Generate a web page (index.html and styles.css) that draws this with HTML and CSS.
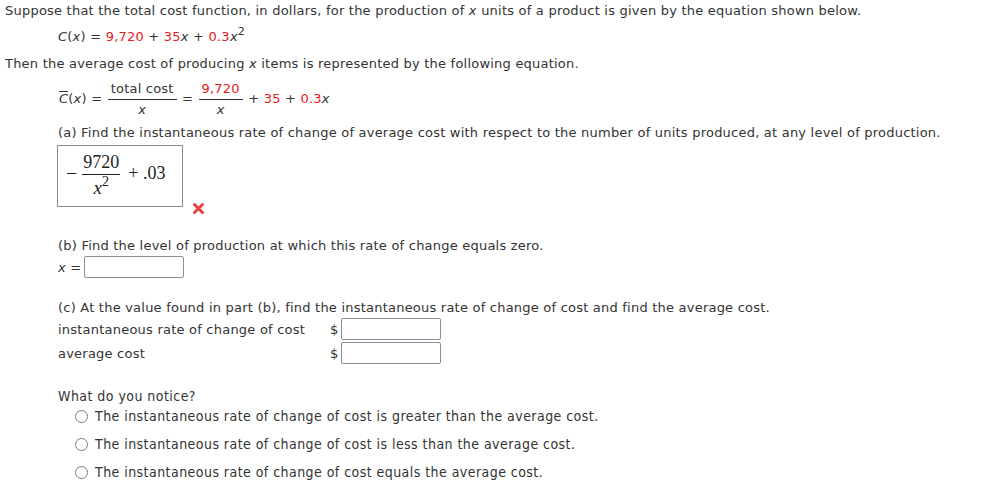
FILE: index.html
```html
<!DOCTYPE html>
<html>
<head>
<meta charset="utf-8">
<link rel="stylesheet" href="styles.css">
</head>
<body>
<div class="page">
  <p class="line l1">Suppose that the total cost function, in dollars, for the production of <i>x</i> units of a product is given by the equation shown below.</p>
  <div class="eq eq1"><i>C</i>(<i>x</i>) = <span class="red">9,720</span> + <span class="red">35</span><i>x</i> + <span class="red">0.3</span><i>x</i><sup>2</sup></div>
  <p class="line l2">Then the average cost of producing <i>x</i> items is represented by the following equation.</p>
  <div class="eq eq2"><span class="cbar"><i>C</i></span>(<i>x</i>) = <span class="frac"><span class="num">total cost</span><span class="den"><i>x</i></span></span> = <span class="frac"><span class="num red">9,720</span><span class="den"><i>x</i></span></span> + <span class="red">35</span> + <span class="red">0.3</span><i>x</i></div>
  <div class="part">
    <p class="q qa">(a) Find the instantaneous rate of change of average cost with respect to the number of units produced, at any level of production.</p>
    <div class="answer-row">
      <div class="answer-box">
        <span class="m-minus">−</span>
        <span class="mfrac"><span class="mnum">9720</span><span class="mden"><i>x</i><sup>2</sup></span></span>
        <span class="m-plus">+ .03</span>
      </div>
      <svg class="xmark" width="13" height="13" viewBox="0 0 13 13"><path d="M2.5 2.5 L10.5 10.5 M10.5 2.5 L2.5 10.5" stroke="#e8403f" stroke-width="3" stroke-linecap="round"/></svg>
    </div>
  </div>
  <div class="part">
    <p class="q qb">(b) Find the level of production at which this rate of change equals zero.</p>
    <div class="xrow"><span class="xlabel"><i>x</i> =</span><span class="input w100"></span></div>
  </div>
  <div class="part">
    <p class="q qc">(c) At the value found in part (b), find the instantaneous rate of change of cost and find the average cost.</p>
    <div class="crow"><span class="clabel">instantaneous rate of change of cost</span><span class="dollar">$</span><span class="input w100"></span></div>
    <div class="crow"><span class="clabel">average cost</span><span class="dollar">$</span><span class="input w100"></span></div>
  </div>
  <div class="notice">
    <p class="nq">What do you notice?</p>
    <div class="opt"><span class="radio"></span>The instantaneous rate of change of cost is greater than the average cost.</div>
    <div class="opt"><span class="radio"></span>The instantaneous rate of change of cost is less than the average cost.</div>
    <div class="opt"><span class="radio"></span>The instantaneous rate of change of cost equals the average cost.</div>
  </div>
</div>
</body>
</html>
```
FILE: styles.css
```css
html, body {
  margin: 0;
  padding: 0;
  background: #fff;
}
body {
  font-family: "DejaVu Sans", Verdana, sans-serif;
  font-size: 13px;
  letter-spacing: 0.22px;
  color: #333;
}
.page {
  padding: 2px 0 0 5px;
}
p { margin: 0; }
.line { line-height: 18px; }
.red { color: #e8191a; }
.eq { margin-left: 53px; }
.eq1 { margin-top: 8px; line-height: 18px; }
.eq1 sup { font-size: 11px; vertical-align: 6px; line-height: 0; }
.l2 { margin-top: 9px; }
.eq2 {
  margin-top: 8px;
  height: 36px;
  line-height: 36px;
  white-space: nowrap;
}
.cbar {
  display: inline-block;
  line-height: 14px;
  border-top: 1px solid #333;
  padding-top: 0;
  margin-left: 1px;
}
.frac {
  display: inline-flex;
  flex-direction: column;
  align-items: center;
  vertical-align: middle;
  margin: 0 1px;
}
.frac .num {
  padding: 0 3px 2px;
  border-bottom: 1px solid #333;
  line-height: 16px;
}
.frac .den {
  line-height: 16px;
  padding-top: 2px;
}
.part { margin-left: 53px; }
.q { line-height: 18px; }
.qa { margin-top: 7px; }
.answer-row {
  display: flex;
  align-items: flex-end;
  margin-top: 3px;
}
.answer-box {
  margin-left: -1px;
  width: 126px;
  height: 62px;
  border: 1px solid #8a8a8a;
  display: flex;
  align-items: flex-start;
  font-family: "Liberation Serif", "Times New Roman", serif;
  font-size: 18px;
  letter-spacing: 0;
  color: #222;
  box-sizing: border-box;
  padding-left: 8px;
  padding-top: 4px;
}
.m-minus { margin-right: 5px; font-size: 20px; line-height: 20px; margin-top: 13px; }
.mfrac {
  display: inline-flex;
  flex-direction: column;
  align-items: center;
  margin-top: 3px;
}
.mnum {
  padding: 0 1px 3px;
  border-bottom: 1px solid #222;
  line-height: 18px;
}
.mden { line-height: 20px; padding-top: 3px; font-size: 19px; }
.mden sup { font-size: 14px; vertical-align: 8px; line-height: 0; }
.m-plus { margin-left: 8px; line-height: 20px; margin-top: 13px; }
.xmark { margin-left: 9px; margin-bottom: -8px; }
.qb { margin-top: 30px; }
.xrow {
  margin-top: 1px;
  display: flex;
  align-items: center;
}
.xlabel { margin-right: 3px; }
.input {
  display: inline-block;
  height: 22px;
  border: 1px solid #8e8e98;
  border-radius: 2px;
  box-sizing: border-box;
  background: #fff;
}
.w100 { width: 100px; }
.qc { margin-top: 21px; }
.crow {
  display: flex;
  align-items: center;
  margin-top: 2px;
}
.crow:nth-child(2) { margin-top: 1px; }
.clabel { width: 272px; }
.dollar { width: 11px; }
.notice {
  margin-left: 53px;
  margin-top: 23px;
  font-family: "DejaVu Sans Condensed", Tahoma, sans-serif;
  font-size: 14px;
  letter-spacing: 0.45px;
}
.nq { line-height: 18px; }
.opt {
  display: flex;
  align-items: center;
  margin-left: 16px;
  height: 28px;
}
.opt:nth-child(2) { margin-top: -3px; }
.radio {
  width: 11px;
  height: 11px;
  border: 1.5px solid #7a7a80;
  border-radius: 50%;
  margin-left: 1px;
  margin-right: 7px;
  box-sizing: content-box;
}
```
